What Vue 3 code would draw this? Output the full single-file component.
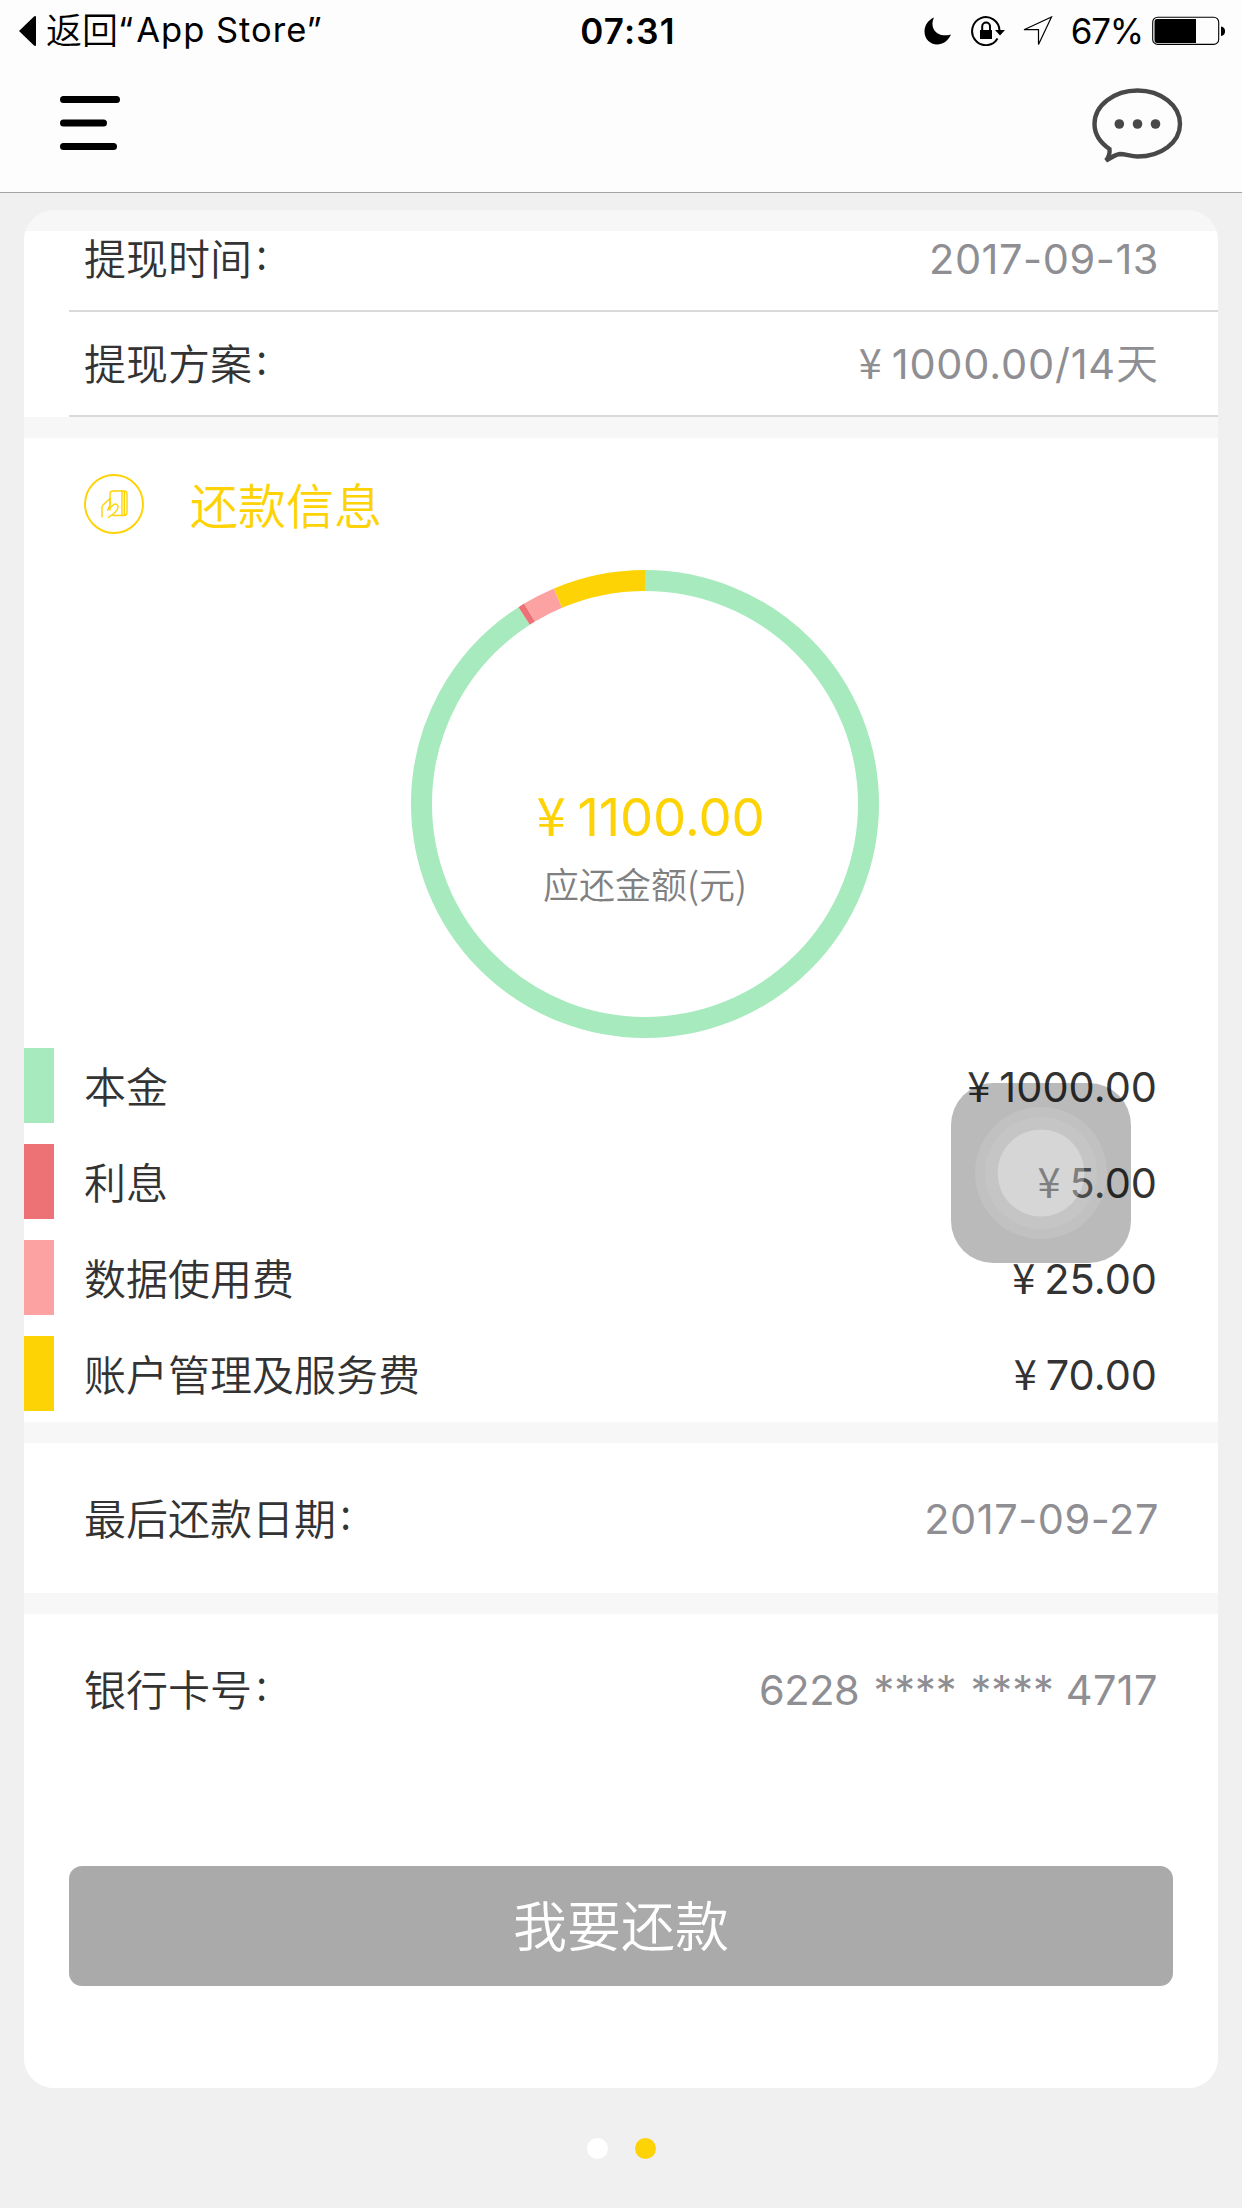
<script setup>
const withdrawal = [
  { label: '提现时间', value: '2017-09-13', cls: 'date' },
  { label: '提现方案', yen: true, value: '1000.00/14', unit: '天', cls: 'plan' },
]

const fees = [
  { label: '本金', amount: 1000, color: '#a7eabd' },
  { label: '利息', amount: 5, color: '#ed7276' },
  { label: '数据使用费', amount: 25, color: '#fda2a2' },
  { label: '账户管理及服务费', amount: 70, color: '#fdd305' },
]

const total = fees.reduce((sum, fee) => sum + fee.amount, 0)

let start = 0
const arcs = fees.map((fee) => {
  const share = (fee.amount / total) * 100
  const arc = { color: fee.color, dash: `${share} ${100 - share}`, offset: -start }
  start += share
  return arc
})
</script>

<template>
  <div class="screen">
    <header class="header">
      <div class="status">
        <div class="back">
          <svg class="back-arrow" width="17" height="30" viewBox="0 0 17 30"><path d="M0 15L15 0.5Q17 -0.5 17 1V29Q17 30.5 15 29.5Z" /></svg>
          <span class="back-cjk">返回</span><span class="back-app"><span class="quote">“</span>App Store”</span>
        </div>
        <div class="time">07:31</div>
        <div class="indicators">
          <svg class="moon" width="28" height="28" viewBox="0 0 28 28"><path d="M10 0.5C5 11 13 21.5 27 17.5C24 24 19 27.500 13 27.500C6 27.500 0.500 22 0.500 14.500C0.500 8.500 4 3 10 0.500Z" /></svg>
          <svg class="lock" width="34" height="30" viewBox="0 0 34 30" fill="none" stroke="#000" stroke-width="2">
            <path d="M28.500 14.500A13.700 14 0 1 0 26.500 22.500" />
            <path d="M24 14H34L29 19.500Z" fill="#000" stroke="none" />
            <rect x="9" y="14" width="12" height="9" fill="#000" stroke="none" />
            <path d="M11.200 14V10.500A3.900 3.900 0 0 1 19 10.500V14" />
          </svg>
          <svg class="arrow" width="30" height="30" viewBox="0 0 30 30" fill="none" stroke="#000" stroke-width="1.200"><path d="M1 13.700L28.500 1L15.500 28.500V13.700Z" /></svg>
          <span class="percent">67%</span>
          <svg class="battery" width="74" height="30" viewBox="0 0 74 30">
            <rect x="0.700" y="1.200" width="66" height="27.200" rx="5" fill="none" stroke="#000" stroke-width="1.100" />
            <path d="M5 3H44V27H5Q2.500 27 2.500 24V6Q2.500 3 5 3Z" />
            <path d="M69 10.500Q73 11 73 15.200Q73 19.500 69 20Z" />
          </svg>
        </div>
      </div>
      <div class="nav">
        <svg width="60" height="54" viewBox="0 0 60 54" fill="none" stroke="#000" stroke-width="7" stroke-linecap="round">
          <path d="M3.500 3.500H56.500M3.500 27H43.500M3.500 50.500H53.500" />
        </svg>
        <svg width="91" height="77" viewBox="0 0 91 77">
          <path d="M45.500 2.500C69 2.500 88 17.500 88 36C88 54.500 69 68.500 45.500 68.500C39 68.500 33.500 66 28 66C23 66.500 19 70 14 72.500C17 69 18 65 17.500 61C8 54.500 2.500 46 2.500 36C2.500 17.500 22 2.500 45.500 2.500Z" fill="none" stroke="#484848" stroke-width="4.400" />
          <g fill="#484848"><circle cx="27.300" cy="36" r="4.800" /><circle cx="45.500" cy="36" r="4.800" /><circle cx="63.500" cy="36" r="4.800" /></g>
        </svg>
      </div>
    </header>

    <main class="card">
      <section class="group withdrawal">
        <div v-for="row in withdrawal" :key="row.label" class="row">
          <span class="label">{{ row.label }}<i class="colon">:</i></span>
          <span class="value" :class="row.cls"><b v-if="row.yen" class="yen">¥</b>{{ row.value }}<em v-if="row.unit" class="unit">{{ row.unit }}</em></span>
        </div>
      </section>

      <section class="group repayment">
        <div class="title">
          <svg width="60" height="60" viewBox="0 0 60 60" fill="none" stroke="#fdd305">
            <circle cx="30" cy="30" r="29" stroke-width="1.900" />
            <g stroke-width="1.400" stroke-linecap="round" stroke-linejoin="round">
              <path d="M26 36V20Q26 17 29 17H40Q43 17 43 20V38Q43 41.500 40 41.500H29" />
              <path d="M38 17V41.500M40.300 18V41" />
              <path d="M18 43V33.500Q18 32 19.500 30.500L26 24.500" />
              <path d="M23.500 36L29.500 30.800C32 29 34.500 31 34 33.500C33.500 36.500 29.500 40.500 27 41.500L24.500 43.500" />
              <path d="M26 24.500V30Q25.500 33 23.800 35.500" />
            </g>
          </svg>
          <h2>还款信息</h2>
        </div>

        <div class="chart">
          <svg class="ring" width="468" height="468" viewBox="0 0 468 468">
            <g transform="rotate(-90 234 234)" fill="none" stroke-width="21">
              <circle v-for="arc in arcs" :key="arc.color" cx="234" cy="234" r="223.500" pathLength="100" :stroke="arc.color" :stroke-dasharray="arc.dash" :stroke-dashoffset="arc.offset" />
            </g>
          </svg>
          <div class="summary">
            <div class="total"><b class="yen">¥</b>{{ total.toFixed(2) }}</div>
            <div class="caption">应还金额(元)</div>
          </div>
        </div>

        <ul class="fees">
          <li v-for="fee in fees" :key="fee.label">
            <span class="swatch" :style="{ background: fee.color }"></span>
            <span class="label">{{ fee.label }}</span>
            <span class="value dark"><b class="yen">¥</b>{{ fee.amount.toFixed(2) }}</span>
          </li>
        </ul>
      </section>

      <section class="group deadline">
        <span class="label">最后还款日期<i class="colon">:</i></span>
        <span class="value date">2017-09-27</span>
      </section>

      <section class="group bank">
        <div class="bank-row">
          <span class="label">银行卡号<i class="colon">:</i></span>
          <span class="value account"><span class="head">6228</span><span>****</span><span>****</span><span class="tail">4717</span></span>
        </div>
        <button class="repay">我要还款</button>
      </section>
    </main>

    <div class="pager"><i></i><i class="active"></i></div>

    <div class="assistive">
      <svg width="180" height="180" viewBox="0 0 180 180" fill="#fff">
        <circle cx="90" cy="90" r="66" opacity="0.110" />
        <circle cx="90" cy="90" r="56" opacity="0.080" />
        <circle cx="90" cy="90" r="43.500" opacity="0.290" />
      </svg>
    </div>
  </div>
</template>

<style>
body {
  background: #f0f0f0;
}
</style>

<style scoped>
.screen {
  position: relative;
  width: 1242px;
  height: 2208px;
  overflow: hidden;
  box-sizing: border-box;
  background: #f0f0f0;
  font-family: Inter, "Noto Sans CJK SC", sans-serif;
  color: #333;
}
.header {
  height: 193px;
  box-sizing: border-box;
  background: #fdfdfd;
  border-bottom: 1px solid #a5a5a5;
}
.status {
  height: 60px;
  display: grid;
  grid-template-columns: 1fr auto 1fr;
  align-items: center;
  color: #000;
}
.back {
  display: flex;
  align-items: center;
  padding-left: 19px;
  line-height: 60px;
  white-space: nowrap;
}
.back-cjk {
  margin-left: 10px;
  padding-bottom: 6px;
  font: 350 36px/54px "Noto Sans CJK SC", sans-serif;
}
.back-app {
  padding-bottom: 3px;
  font-size: 34.5px;
  line-height: 57px;
  letter-spacing: 1px;
}
.quote {
  margin-right: 2px;
}
.time {
  padding-left: 14px;
  font-size: 35px;
  font-weight: 600;
  line-height: 62px;
  letter-spacing: 1.200px;
}
.indicators {
  display: flex;
  justify-content: flex-end;
  align-items: center;
  padding-right: 16px;
}
.lock {
  margin-left: 19px;
}
.arrow {
  margin-left: 18px;
}
.percent {
  margin: 0 9px 0 18px;
  font-size: 35px;
  line-height: 62px;
  letter-spacing: -1.200px;
}
.nav {
  display: flex;
  justify-content: space-between;
  align-items: flex-start;
  padding: 28px 59px 0 60px;
}
.nav svg:first-child {
  margin-top: 8px;
}
.card {
  display: flex;
  flex-direction: column;
  gap: 21px;
  width: 1194px;
  height: 1878px;
  margin: 17px auto 0;
  box-sizing: border-box;
  padding-top: 21px;
  border-radius: 30px;
  overflow: hidden;
  background: #f7f7f7;
}
.group {
  background: #fff;
}
.label {
  padding: 0 0 3px 60px;
  font: 350 42px/54px "Noto Sans CJK SC", sans-serif;
}
.colon {
  display: inline-block;
  margin-left: 4px;
  font-style: normal;
  transform: translateY(-6px);
}
.value {
  padding-right: 60px;
  font-size: 41.500px;
  line-height: 54px;
  color: #8e8e93;
}
.value.dark {
  padding: 2px 61px 0 0;
  color: #333;
}
.date {
  padding-right: 59px;
  letter-spacing: 0.550px;
}
.plan {
  letter-spacing: 0.800px;
}
.yen {
  margin-right: 9px;
  font-family: "Noto Sans CJK SC", sans-serif;
  font-weight: 400;
  line-height: 1;
}
.unit {
  font: 350 42px/1 "Noto Sans CJK SC", sans-serif;
  letter-spacing: 0;
}
.withdrawal {
  height: 186px;
}
.row {
  display: flex;
  justify-content: space-between;
  align-items: center;
  height: 105px;
  box-sizing: border-box;
  margin-left: 45px;
  border-bottom: 2px solid #d9d9db;
}
.row:first-child {
  height: 81px;
  padding-bottom: 24px;
}
.row .label {
  padding-left: 15px;
}
.repayment {
  height: 984px;
}
.title {
  display: flex;
  align-items: center;
  height: 132px;
  padding-left: 60px;
}
.title h2 {
  margin: 0 0 2px 46px;
  font: 350 48px/60px "Noto Sans CJK SC", sans-serif;
  color: #fdd305;
}
.chart {
  display: grid;
  width: 468px;
  height: 468px;
  margin-left: 387px;
}
.ring,
.summary {
  grid-area: 1 / 1;
}
.summary {
  padding-top: 217px;
  text-align: center;
}
.total {
  padding-left: 11px;
  font-size: 52.700px;
  line-height: 60px;
  letter-spacing: -0.200px;
  color: #fdd305;
}
.total .yen {
  margin-right: 12px;
}
.caption {
  margin-top: 11px;
  font: 350 36px/50px "Noto Sans CJK SC", sans-serif;
  color: #808080;
}
.fees {
  display: flex;
  flex-direction: column;
  gap: 21px;
  margin: 10px 0 0;
  padding: 0;
  list-style: none;
}
.fees li {
  display: flex;
  align-items: center;
  height: 75px;
}
.fees .label {
  flex: 1;
  padding: 0 0 1px 30px;
}
.swatch {
  width: 30px;
  height: 75px;
}
.deadline,
.bank-row {
  display: flex;
  justify-content: space-between;
  align-items: center;
  height: 150px;
}
.deadline .value,
.bank-row .value {
  padding-top: 2px;
}
.bank {
  flex: 1;
}
.account {
  display: flex;
  gap: 14px;
}
.head {
  letter-spacing: -0.400px;
}
.tail {
  margin-left: -2px;
  letter-spacing: 0.400px;
}
.repay {
  display: block;
  width: 1104px;
  height: 120px;
  margin: 102px 0 0 45px;
  padding: 0 0 4px;
  border: 0;
  border-radius: 13px;
  background: #aaa;
  color: #fff;
  font: 350 54px/116px "Noto Sans CJK SC", sans-serif;
}
.pager {
  display: flex;
  justify-content: center;
  gap: 27px;
  margin-top: 50px;
}
.pager i {
  width: 21px;
  height: 21px;
  border-radius: 50%;
  background: #fff;
}
.pager .active {
  background: #fdd305;
}
.assistive {
  position: absolute;
  left: 951px;
  top: 1083px;
  width: 180px;
  height: 180px;
  border-radius: 42px;
  background: rgba(0, 0, 0, 0.270);
}
</style>
